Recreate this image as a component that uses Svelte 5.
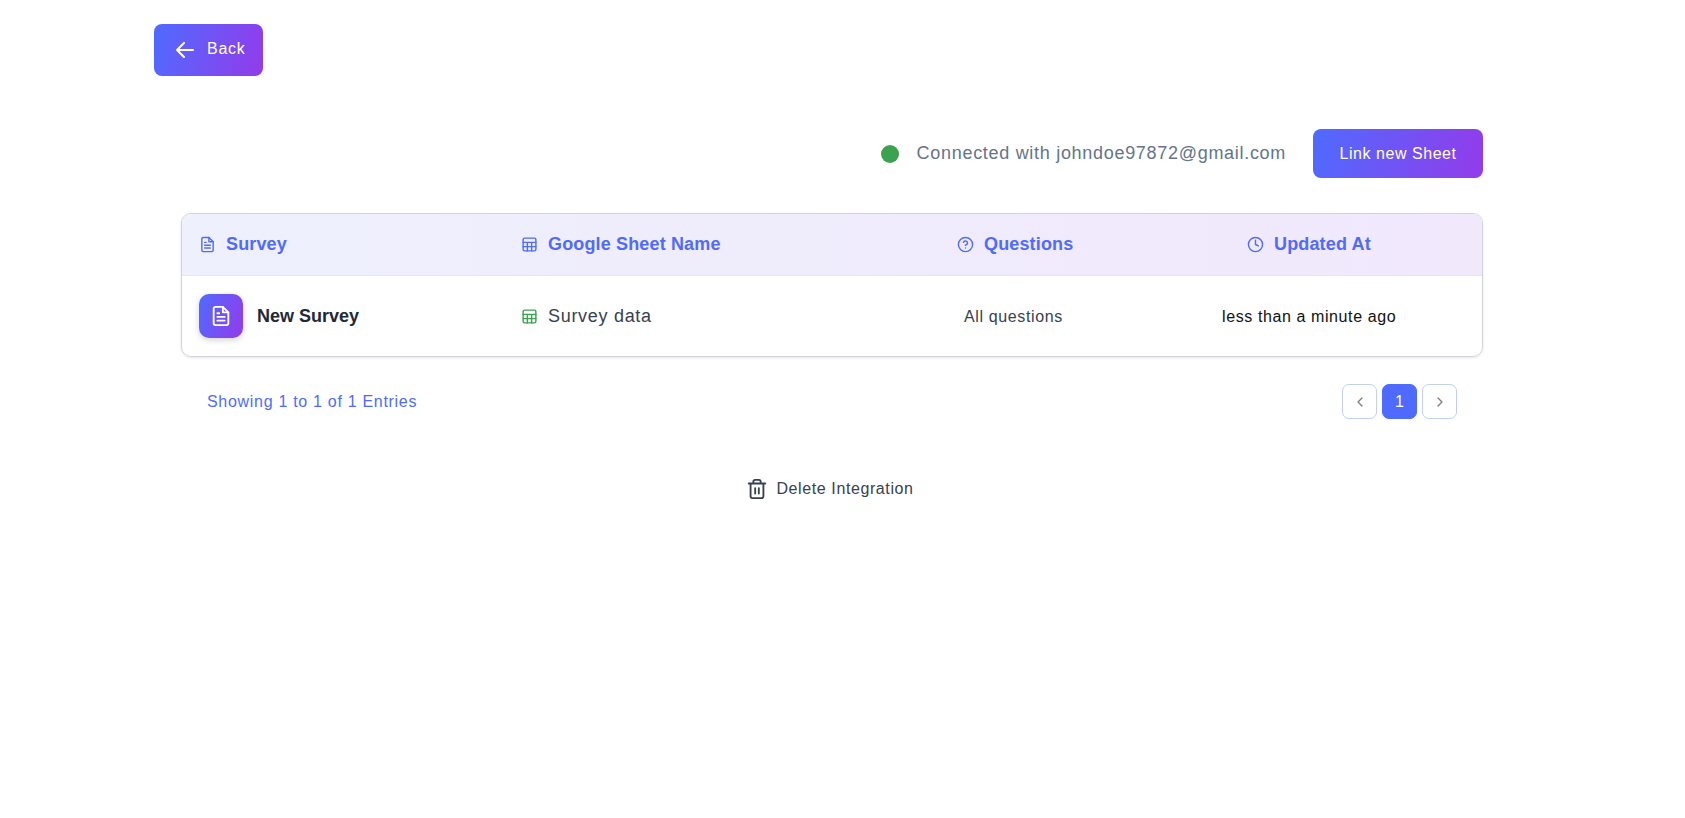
<script>
	const headers = [
		{ label: "Survey", cls: "c1", icon: "doc" },
		{ label: "Google Sheet Name", cls: "c2", icon: "table" },
		{ label: "Questions", cls: "c3", icon: "help" },
		{ label: "Updated At", cls: "c4", icon: "clock" }
	];
</script>

{#snippet icon(name)}
	{#if name === "doc"}
		<path d="M14 2H6a2 2 0 0 0-2 2v16a2 2 0 0 0 2 2h12a2 2 0 0 0 2-2V8z" />
		<path d="M14 2v6h6M8 13h8M8 17h8M8 9h2" />
	{:else if name === "table"}
		<rect x="3" y="3" width="18" height="18" rx="2" />
		<path d="M3 9h18M3 15h18M9 9v12M15 9v12" />
	{:else if name === "help"}
		<circle cx="12" cy="12" r="10" />
		<path d="M9.1 9a3 3 0 0 1 5.8 1c0 2-3 3-3 3M12 17h.01" />
	{:else if name === "clock"}
		<circle cx="12" cy="12" r="10" />
		<path d="M12 6v6l4 2" />
	{/if}
{/snippet}

<div class="page">
	<button class="btn back">
		<svg width="24" height="24" viewBox="0 0 24 24" class="ico"><path d="M20 12H4M11 5l-7 7 7 7" /></svg>
		<span class="label">Back</span>
	</button>

	<div class="status">
		<span class="dot"></span>
		<span class="connected">Connected with johndoe97872@gmail.com</span>
		<button class="btn link"><span class="label">Link new Sheet</span></button>
	</div>

	<div class="table">
		<div class="row head">
			{#each headers as h}
				<div class="cell {h.cls}">
					<svg width="17" height="17" viewBox="0 0 24 24" class="ico">{@render icon(h.icon)}</svg>
					{h.label}
				</div>
			{/each}
		</div>
		<div class="row body">
			<div class="cell c1">
				<span class="badge">
					<svg width="22" height="22" viewBox="0 0 24 24" class="ico">{@render icon("doc")}</svg>
				</span>
				<b>New Survey</b>
			</div>
			<div class="cell c2 sheet">
				<svg width="17" height="17" viewBox="0 0 24 24" class="ico green">{@render icon("table")}</svg>
				Survey data
			</div>
			<div class="cell c3 all">All questions</div>
			<div class="cell c4 when">less than a minute ago</div>
		</div>
	</div>

	<div class="pager">
		<span class="showing">Showing 1 to 1 of 1 Entries</span>
		<div class="pages">
			<button class="pg"><svg width="16" height="16" viewBox="0 0 24 24" class="ico"><path d="M15 18l-6-6 6-6" /></svg></button>
			<button class="pg on">1</button>
			<button class="pg"><svg width="16" height="16" viewBox="0 0 24 24" class="ico"><path d="M9 18l6-6-6-6" /></svg></button>
		</div>
	</div>

	<div class="delete">
		<svg width="22" height="22" viewBox="0 0 24 24" class="ico"><path d="M3 6h18M19 6v14a2 2 0 0 1-2 2H7a2 2 0 0 1-2-2V6M8 6V4a2 2 0 0 1 2-2h4a2 2 0 0 1 2 2v2M10 11v6M14 11v6" /></svg>
		Delete Integration
	</div>
</div>

<style>
	:global(body) {
		background: #fff;
		font-family: "Liberation Sans", Arial, sans-serif;
	}
	.page {
		padding: 24px 202px 0 154px;
	}
	.ico {
		fill: none;
		stroke: currentColor;
		stroke-width: 2;
		stroke-linecap: round;
		stroke-linejoin: round;
		flex: none;
	}
	.btn {
		border: 0;
		border-radius: 8px;
		color: #fff;
		background: linear-gradient(105deg, #4f6bff, #933bea);
		font: inherit;
		font-size: 16px;
		display: flex;
		align-items: center;
	}
	.label {
		margin-bottom: 2px;
	}
	.back {
		width: 109px;
		height: 52px;
		padding-left: 19px;
		gap: 10px;
		letter-spacing: 0.75px;
	}
	.status {
		margin-top: 53px;
		display: flex;
		justify-content: flex-end;
		align-items: center;
	}
	.dot {
		width: 18px;
		height: 18px;
		border-radius: 50%;
		background: #3ba350;
	}
	.connected {
		margin-left: 18px;
		color: #64748b;
		font-size: 18px;
		letter-spacing: 0.7px;
	}
	.link {
		margin-left: 27px;
		width: 170px;
		height: 49px;
		justify-content: center;
		letter-spacing: 0.55px;
	}
	.link .label {
		margin-bottom: 0;
	}
	.table {
		margin: 35px 0 0 27px;
		border: 1px solid #d1d5db;
		border-radius: 10px;
		overflow: hidden;
		box-shadow: 0 1px 3px rgba(0, 0, 0, 0.1);
	}
	.row {
		display: grid;
		grid-template-columns: 322px 436px 290px 1fr;
		align-items: center;
	}
	.head {
		height: 62px;
		background: linear-gradient(90deg, #eef0fd, #f1e8fc);
		color: #4f6bff;
		font-size: 18px;
		font-weight: 700;
		letter-spacing: 0.15px;
		border-bottom: 1px solid #e5e7eb;
		box-sizing: border-box;
	}
	.body {
		height: 80px;
	}
	.cell {
		display: flex;
		align-items: center;
		gap: 9px;
		padding-left: 17px;
	}
	.head .cell {
		gap: 10px;
	}
	.badge {
		width: 44px;
		height: 44px;
		border-radius: 10px;
		background: linear-gradient(110deg, #4f6bff, #933bea);
		color: #fff;
		display: flex;
		align-items: center;
		justify-content: center;
		box-shadow: 0 2px 6px rgba(0, 0, 0, 0.18);
	}
	.body b {
		font-size: 18px;
		color: #1f2937;
		margin-left: 5px;
	}
	.sheet {
		color: #374151;
		font-size: 18px;
		letter-spacing: 0.7px;
		gap: 10px;
	}
	.green {
		color: #3ba350;
	}
	.all {
		color: #374151;
		font-size: 16px;
		letter-spacing: 0.63px;
		padding-left: 24px;
		padding-top: 2px;
	}
	.when {
		color: #111;
		font-size: 16px;
		letter-spacing: 0.6px;
		padding-left: 0;
		padding-top: 2px;
		margin-left: -8px;
	}
	.pager {
		margin: 27px 0 0 27px;
		padding: 0 26px 0 26px;
		display: flex;
		justify-content: space-between;
		align-items: center;
	}
	.showing {
		color: #4f6bff;
		font-size: 16px;
		letter-spacing: 0.7px;
	}
	.pages {
		display: flex;
		gap: 5px;
	}
	.pg {
		width: 35px;
		height: 35px;
		border: 1px solid #c3cff2;
		border-radius: 7px;
		background: #fff;
		color: #808080;
		padding: 0;
		display: flex;
		align-items: center;
		justify-content: center;
		font: inherit;
	}
	.on {
		background: #4f6bff;
		border-color: #4f6bff;
		color: #fff;
		font-size: 16px;
	}
	.delete {
		margin-top: 59px;
		padding-left: 23px;
		display: flex;
		justify-content: center;
		align-items: center;
		gap: 8px;
		color: #374151;
		font-size: 16px;
		letter-spacing: 0.6px;
	}
</style>
